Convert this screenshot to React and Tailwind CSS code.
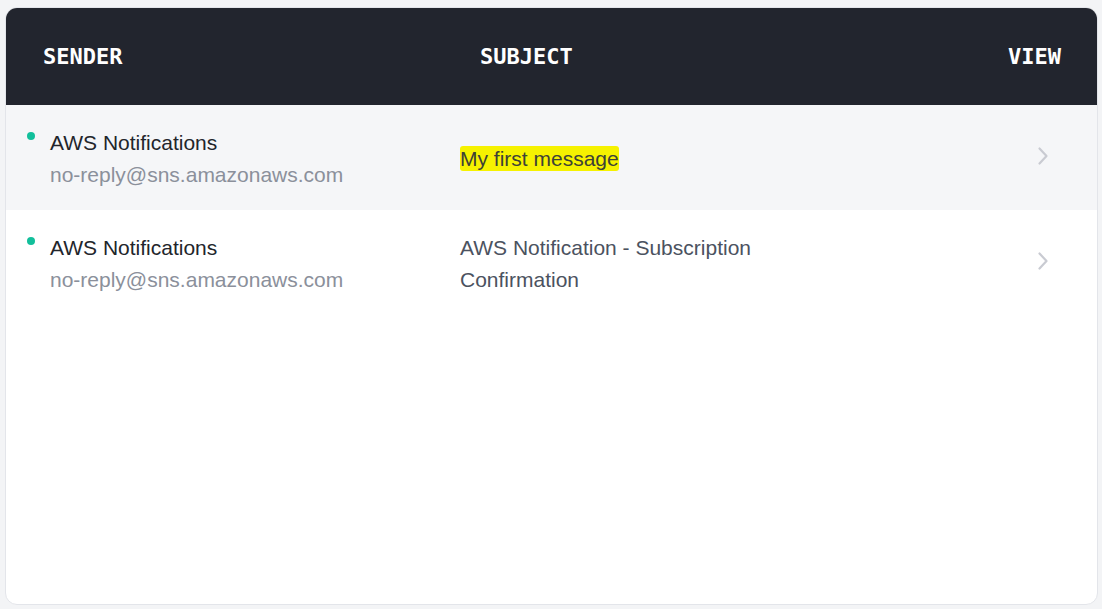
import React from 'react';

const messages = [
  {
    id: 1,
    name: 'AWS Notifications',
    email: 'no-reply@sns.amazonaws.com',
    subject: 'My first message',
    highlight: true,
  },
  {
    id: 2,
    name: 'AWS Notifications',
    email: 'no-reply@sns.amazonaws.com',
    subject: 'AWS Notification - Subscription Confirmation',
    highlight: false,
  },
];

function Chevron() {
  return (
    <svg width="12" height="20" viewBox="0 0 12 20" fill="none">
      <path d="M2.5 2.5 L9.5 10 L2.5 17.5" stroke="#c9cbd2" strokeWidth="2.2" strokeLinecap="round" strokeLinejoin="round" />
    </svg>
  );
}

export default function App() {
  return (
    <div className="h-screen w-full bg-[#f3f4f6] pt-[7px] pl-[5px] pr-[4px] pb-[4px] flex">
      <div className="flex-1 flex flex-col bg-white border border-[#e3e5ea] rounded-[12px] overflow-hidden" style={{ fontFamily: '"Liberation Sans", Arial, sans-serif' }}>
        {/* header */}
        <div className="h-[98px] shrink-0 bg-[#22252e] flex items-center text-white font-bold text-[22px] -mt-px -mx-px" style={{ fontFamily: '"DejaVu Sans Mono", monospace' }}>
          <div className="w-[475px] pl-[38px]">SENDER</div>
          <div className="flex-1">SUBJECT</div>
          <div className="pr-[37px]">VIEW</div>
        </div>

        {messages.map((m, i) => (
          <div key={m.id} className={`h-[105px] flex items-center text-[21px] leading-8 pt-[2px] ${i === 0 ? 'bg-[#f5f6f8]' : 'bg-white'}`}>
            <div className="w-[454px] flex items-start">
              <div className="w-[44px] flex justify-center pt-[5px] pl-[5px]">
                <span className="w-[8px] h-[8px] rounded-full bg-[#12bf9b]" />
              </div>
              <div>
                <div className="text-[#22252b]">{m.name}</div>
                <div className="text-[#8b909b]">{m.email}</div>
              </div>
            </div>
            <div className="flex-1 text-[#4b5260] pr-[40px]">
              <div className="max-w-[320px]">
                {m.highlight ? (
                  <span className="bg-[#f6f200] text-[#3d4137] py-[1px] rounded-[3px]">{m.subject}</span>
                ) : (
                  m.subject
                )}
              </div>
            </div>
            <div className="w-[60px] pr-[48px] flex justify-end -mt-[6px]">
              <Chevron />
            </div>
          </div>
        ))}
      </div>
    </div>
  );
}
